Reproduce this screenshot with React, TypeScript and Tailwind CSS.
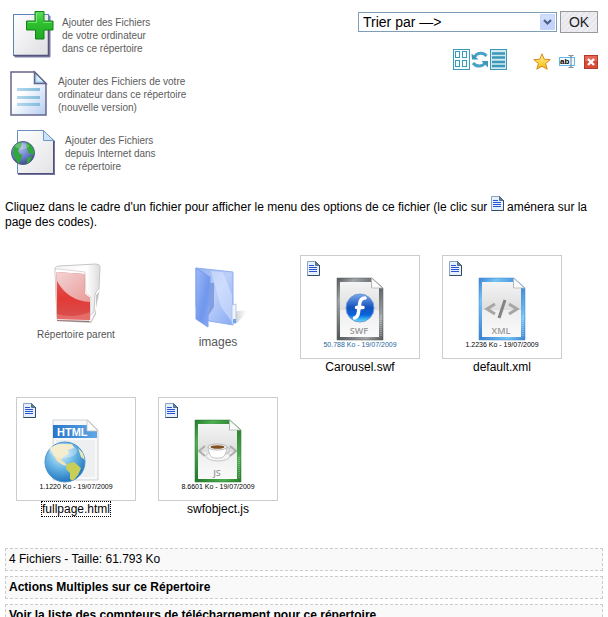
import type { ReactNode } from "react";

function AddFileIcon() {
  return (
    <svg width="44" height="48" viewBox="0 0 44 48" aria-hidden="true" className="shrink-0">
      <defs>
        <linearGradient id="addPaper" x1="0" y1="0" x2="1" y2="1">
          <stop offset="0" stopColor="#fff" />
          <stop offset="1" stopColor="#dedee2" />
        </linearGradient>
        <linearGradient id="addPlus" x1="0" y1="0" x2="0" y2="1">
          <stop offset="0" stopColor="#5ee05e" />
          <stop offset="0.4" stopColor="#2fc02f" />
          <stop offset="1" stopColor="#1eaa22" />
        </linearGradient>
      </defs>
      <rect x="4.500" y="4.500" width="36" height="42" rx="1" fill="#7c7ca6" />
      <rect x="3.500" y="3.500" width="35" height="41" fill="url(#addPaper)" stroke="#5c83b4" />
      <path d="M38.500 12V44.500H4" fill="none" stroke="#54547e" strokeWidth="1.500" />
      <path d="M25 0.500h9V10h9v9h-9v9h-8.500V19H16.500v-9H25z" fill="url(#addPlus)" stroke="#138018" />
      <path d="M26.500 2v9.500H18M33 11.500h8.500" fill="none" stroke="#92ee92" opacity=".7" />
    </svg>
  );
}

function NewFileIcon() {
  return (
    <svg width="40" height="48" viewBox="0 0 40 48" aria-hidden="true" className="shrink-0">
      <defs>
        <linearGradient id="newPaper" x1="0" y1="0" x2="1" y2="1">
          <stop offset="0.4" stopColor="#fff" />
          <stop offset="1" stopColor="#b4cdf0" />
        </linearGradient>
        <linearGradient id="newLine" x1="0" y1="0" x2="1" y2="0">
          <stop offset="0" stopColor="#b4d8ee" />
          <stop offset="1" stopColor="#83bcdc" />
        </linearGradient>
      </defs>
      <path d="M1 2H24.500L36 13.500V45H1z" fill="url(#newPaper)" stroke="#67658a" strokeWidth="1.500" />
      <path d="M24.500 2V13.500H36z" fill="#9fd2ee" stroke="#67658a" strokeWidth="1.500" />
      <path d="M26.500 5v6.500h6.500z" fill="#d6effb" />
      <g fill="url(#newLine)">
        <rect x="7" y="18" width="23" height="3" />
        <rect x="7" y="26" width="23" height="3" />
        <rect x="7" y="33" width="23" height="3" />
      </g>
    </svg>
  );
}

function WebFileIcon() {
  return (
    <svg width="47" height="48" viewBox="0 0 47 48" aria-hidden="true" className="shrink-0">
      <defs>
        <linearGradient id="webPaper" x1="0" y1="0" x2="1" y2="1">
          <stop offset="0" stopColor="#fff" />
          <stop offset="1" stopColor="#e3e3e6" />
        </linearGradient>
        <radialGradient id="webGlobe" cx=".4" cy=".3" r=".75">
          <stop offset="0" stopColor="#aabbe8" />
          <stop offset="0.6" stopColor="#6478c4" />
          <stop offset="1" stopColor="#38427a" />
        </radialGradient>
        <clipPath id="webClip">
          <circle cx="13" cy="24" r="11" />
        </clipPath>
      </defs>
      <path d="M8 2H34L45 12V46H8z" fill="#75759c" />
      <path d="M7.500 1.500H33.500L43.500 11.500V44.500H7.500z" fill="url(#webPaper)" stroke="#6b8dbb" />
      <path d="M43.500 11.500V44.500H8" fill="none" stroke="#50507c" />
      <path d="M33.500 1.500V11.500H43.500z" fill="#cbe2f8" stroke="#6b9ac8" />
      <circle cx="13" cy="24" r="11.500" fill="url(#webGlobe)" stroke="#52608c" />
      <g clipPath="url(#webClip)" fill="#31a83a">
        <path d="M4 15c2-2 5-3 8-2l-1 5-3 3 1 3 3 2-1 4-2 5-3-4-3-6z" />
        <path d="M17 13l5 3 3 7-2 3-4-2-2-4-1-4z" />
        <path d="M17 29l5-2-2 6-3 2z" />
      </g>
      <ellipse cx="12" cy="17" rx="7" ry="3" fill="#fff" opacity=".25" />
    </svg>
  );
}

function NoteIcon({ className = "" }: { className?: string }) {
  return (
    <svg width="13" height="15" viewBox="0 0 13 15" aria-hidden="true" className={className}>
      <path d="M.5.500H8.500L12.500 4.500V14.500H.5z" fill="#e6effb" stroke="#8ba4bd" />
      <path d="M12.500 4V14.500H.5" fill="none" stroke="#2f4d68" />
      <path d="M8.500.500V4.500H12.500z" fill="#5d7f9b" stroke="#34546f" strokeWidth=".7" />
      <path d="M2 4.500H7M2 6.500H10M2 8.500H10M2 10.500H10" stroke="#2554d4" />
    </svg>
  );
}

function GridIcon() {
  return (
    <svg width="17" height="21" viewBox="0 0 17 21" aria-hidden="true">
      <g fill="#f4fbfd" stroke="#3d97b7">
        <rect x=".5" y=".5" width="16" height="20" />
        <rect x="2.500" y="2.500" width="4" height="6" />
        <rect x="9.500" y="2.500" width="4" height="6" />
        <rect x="2.500" y="11.500" width="4" height="6" />
        <rect x="9.500" y="11.500" width="4" height="6" />
      </g>
    </svg>
  );
}

function RefreshIcon() {
  return (
    <svg width="18" height="21" viewBox="0 0 18 21" aria-hidden="true">
      <path d="M3.500 8C6 3.500 12 3 15.500 7" fill="none" stroke="#4aa3c3" strokeWidth="3" />
      <path d="M.5 4.500L1 10.500H7.500z" fill="#3d97b7" />
      <path d="M2 14C5 18 11.500 18 14 14" fill="none" stroke="#4aa3c3" strokeWidth="3" />
      <path d="M10.500 12H17V18.500z" fill="#3d97b7" />
    </svg>
  );
}

function ListIcon() {
  return (
    <svg width="17" height="21" viewBox="0 0 17 21" aria-hidden="true">
      <rect x=".5" y=".5" width="16" height="20" fill="#d0eaf3" stroke="#3d97b7" />
      <path d="M2 4.500H15M2 8.500H15M2 13H15M2 17H15" stroke="#3d97b7" strokeWidth="2.500" />
    </svg>
  );
}

function StarIcon() {
  return (
    <svg width="18" height="17" viewBox="0 0 18 17" aria-hidden="true">
      <defs>
        <linearGradient id="star" x1="0" y1="0" x2="0" y2="1">
          <stop offset="0" stopColor="#fff59a" />
          <stop offset="1" stopColor="#f7b90c" />
        </linearGradient>
      </defs>
      <path
        d="M9 .8l2.200 5.400 6 .5-4.600 3.800 1.600 5.700L9 13.200l-5.200 3 1.600-5.700L.8 6.700l6-.5z"
        fill="url(#star)"
        stroke="#d98a1c"
        strokeLinejoin="round"
      />
    </svg>
  );
}

function RenameIcon() {
  return (
    <svg width="17" height="15" viewBox="0 0 17 15" aria-hidden="true">
      <rect x=".5" y="3.500" width="15" height="8" fill="#f2fafe" stroke="#5fbae8" />
      <text x="1" y="10" fontSize="8" fontWeight="bold" fontFamily="Liberation Sans, sans-serif">
        ab
      </text>
      <path d="M9.500 1.500H11.500L12 2.500 12.500 1.500H14.500M12 2V13M9.500 13.500H11.500L12 12.500 12.500 13.500H14.500" fill="none" stroke="#6f7f8e" />
    </svg>
  );
}

function DeleteIcon() {
  return (
    <svg width="14" height="14" viewBox="0 0 14 14" aria-hidden="true">
      <rect x=".5" y=".5" width="13" height="13" fill="#d94a37" stroke="#b5382b" />
      <path d="M1 1H13V6H1z" fill="#ea7c6a" opacity=".6" />
      <path d="M4 4l6 6M10 4l-6 6" stroke="#fff" strokeWidth="2.400" />
    </svg>
  );
}

function RedFolder() {
  return (
    <svg width="50" height="60" viewBox="0 0 50 60" aria-hidden="true">
      <defs>
        <linearGradient id="redFront" x1="0" y1="0" x2="0" y2="1">
          <stop offset="0" stopColor="#df6464" />
          <stop offset=".55" stopColor="#e23a35" />
          <stop offset="1" stopColor="#d65353" />
        </linearGradient>
        <linearGradient id="redGloss" x1="0" y1="0" x2="1" y2="1">
          <stop offset="0" stopColor="#f3d4d4" />
          <stop offset="1" stopColor="#e99a98" />
        </linearGradient>
        <linearGradient id="redBack" x1="0" y1="0" x2="1" y2="0">
          <stop offset="0" stopColor="#f4f4f4" />
          <stop offset=".7" stopColor="#fff" />
          <stop offset="1" stopColor="#dcdcdc" />
        </linearGradient>
      </defs>
      <path d="M2 58L38 60 43 51 43 32 47 28V26L42 50 38 58z" fill="#8a8a8a" opacity=".5" />
      <path d="M2 5Q3 3 6 3L43 1Q47 1 47 4L46 26Q42 29 42 32L41 49 36 53 4 54z" fill="url(#redBack)" stroke="#c6c6c6" />
      <path d="M2 8Q2 5 5 6L32 9 33 30 38 34 37 57Q36 58 34 58L4 57z" fill="#fff" stroke="#cbbcbc" strokeWidth=".6" />
      <path d="M3.500 9L31.500 11 32 31 37 35V57L4 56z" fill="url(#redFront)" />
      <path d="M3.500 9L31.500 11 32 31 37 35V39Q15 38 4 18z" fill="url(#redGloss)" />
      <path d="M4 51Q20 56 37 49V57L4 56z" fill="#f07f79" opacity=".6" />
      <path d="M4 57.500L36 58.500" stroke="#7c4444" opacity=".7" />
    </svg>
  );
}

function BlueFolder() {
  return (
    <svg width="54" height="62" viewBox="0 0 54 62" aria-hidden="true">
      <defs>
        <linearGradient id="blueBack" x1="0" y1="0" x2="1" y2="1">
          <stop offset="0" stopColor="#93aff4" />
          <stop offset=".5" stopColor="#bccffa" />
          <stop offset="1" stopColor="#88aaf3" />
        </linearGradient>
        <linearGradient id="blueFront" x1="0" y1="0" x2="1" y2="1">
          <stop offset="0" stopColor="#9fb9f8" />
          <stop offset=".6" stopColor="#6f97ed" />
          <stop offset="1" stopColor="#8eaef5" />
        </linearGradient>
        <linearGradient id="blueShade" x1="0" y1="0" x2="1" y2="0">
          <stop offset="0" stopColor="#999" stopOpacity=".6" />
          <stop offset="1" stopColor="#ccc" stopOpacity="0" />
        </linearGradient>
      </defs>
      <path d="M38 56L42 44 53 43Q48 50 42 56z" fill="url(#blueShade)" />
      <path d="M1 1L38 5V58L14 54 1 40z" fill="url(#blueBack)" stroke="#92aff0" />
      <path d="M16 4L28 5 37 28V55L26 40z" fill="#e0e9ff" opacity=".5" />
      <path d="M15 16H19V40L13 49z" fill="#557bc9" opacity=".55" />
      <path d="M1 1L15 10V36L13 40V60L1 52z" fill="url(#blueFront)" stroke="#7c9eea" />
      <path d="M37 38L41 37V56L37 57z" fill="#f1f5fb" stroke="#a6bfe8" strokeWidth=".8" />
      <path d="M38 52H41V56H38z" fill="#6fa6e8" />
    </svg>
  );
}

type PageFrameProps = { id: string; edge: string; light: string; label: string; children: ReactNode };

function PageFrame({ id, edge, light, label, children }: PageFrameProps) {
  return (
    <svg width="48" height="64" viewBox="0 0 48 64" aria-hidden="true">
      <defs>
        <linearGradient id={`${id}Edge`} x1="0" y1="0" x2="1" y2="1">
          <stop offset="0" stopColor={edge} />
          <stop offset=".2" stopColor={light} />
          <stop offset=".5" stopColor={edge} />
          <stop offset=".8" stopColor={light} />
          <stop offset="1" stopColor={edge} />
        </linearGradient>
        <linearGradient id={`${id}Paper`} x1="0" y1="0" x2="0" y2="1">
          <stop offset="0" stopColor="#f4f4f4" />
          <stop offset=".5" stopColor="#dedede" />
          <stop offset=".51" stopColor="#eee" />
          <stop offset="1" stopColor="#fafafa" />
        </linearGradient>
      </defs>
      <path d="M1 1H36L47 11V63H1z" fill={`url(#${id}Edge)`} stroke={edge} strokeOpacity=".5" />
      <path d="M4 5H35V11H43V60H4z" fill={`url(#${id}Paper)`} />
      <path d="M35.500 1V11H46.500z" fill="#fafafa" stroke="#b5b5b5" strokeWidth=".8" />
      <path d="M45 38V59" stroke="#fff" strokeDasharray="1 1" opacity=".5" />
      {children}
      <text x="23" y="57" textAnchor="middle" fontSize="9" fill="#999" fontFamily="Open Sans, Noto Sans, sans-serif" fontWeight="600">
        {label}
      </text>
    </svg>
  );
}

function SwfIcon() {
  return (
    <PageFrame id="swf" edge="#55585a" light="#a2a6a8" label="SWF">
      <defs>
        <linearGradient id="flashBall" x1="0" y1="0" x2="0" y2="1">
          <stop offset="0" stopColor="#7ca8ea" />
          <stop offset=".48" stopColor="#1452bc" />
          <stop offset=".75" stopColor="#0a65dd" />
          <stop offset="1" stopColor="#5be5ff" />
        </linearGradient>
      </defs>
      <circle cx="24" cy="31" r="14" fill="url(#flashBall)" stroke="#6f96d6" />
      <path d="M29 21Q24 21 23.500 28L22.500 35Q22 40 18.500 41M20.500 30.500H27" fill="none" stroke="#fff" strokeWidth="3.500" strokeLinecap="round" />
    </PageFrame>
  );
}

function XmlIcon() {
  return (
    <PageFrame id="xml" edge="#3c83d2" light="#76c4f5" label="XML">
      <path d="M17 27L9 32 17 37M31 27L39 32 31 37" fill="none" stroke="#a6a6a6" strokeWidth="3" />
      <path d="M27 23L21 41" stroke="#838383" strokeWidth="3" />
    </PageFrame>
  );
}

function JsIcon() {
  return (
    <PageFrame id="js" edge="#267a2c" light="#4fae51" label="JS">
      <path d="M11 27L5 32 11 37M36 27L42 32 36 37" fill="none" stroke="#adadad" strokeWidth="2" />
      <ellipse cx="24" cy="37" rx="12" ry="5" fill="#f4f4f4" stroke="#bbb" strokeWidth=".8" />
      <path d="M32 29Q38 28 35 33 34 35 30 35" fill="none" stroke="#ccc" strokeWidth="1.500" />
      <path d="M14 28Q15 39 21 39H26Q32 39 33 28z" fill="#fff" stroke="#bbb" strokeWidth=".8" />
      <ellipse cx="23.500" cy="28" rx="9.500" ry="3" fill="#f6f6f6" stroke="#aaa" strokeWidth=".8" />
      <ellipse cx="23.500" cy="28" rx="7" ry="1.800" fill="#815021" />
    </PageFrame>
  );
}

function HtmlIcon() {
  return (
    <svg width="64" height="64" viewBox="8 0 64 64" aria-hidden="true">
      <defs>
        <radialGradient id="earth" cx=".4" cy=".3" r=".75">
          <stop offset="0" stopColor="#d8f1fb" />
          <stop offset=".5" stopColor="#64b3e4" />
          <stop offset="1" stopColor="#1b6cb8" />
        </radialGradient>
        <linearGradient id="htmlBand" x1="0" y1="0" x2="1" y2="0">
          <stop offset="0" stopColor="#2a76c9" />
          <stop offset="1" stopColor="#61a7e6" />
        </linearGradient>
        <clipPath id="earthClip">
          <circle cx="29" cy="43" r="20" />
        </clipPath>
      </defs>
      <path d="M17 1H52L62 11V61H17z" fill="#f7f8f9" stroke="#cfd1d4" />
      <path d="M20 21H59V58H20z" fill="#edeff1" />
      <path d="M17 6H55L61 12V19H17z" fill="url(#htmlBand)" />
      <text x="21" y="17" fontSize="11" fontWeight="bold" fill="#fff" fontFamily="Liberation Sans, sans-serif">
        HTML
      </text>
      <path d="M51 1V12H62z" fill="#fbfbfb" stroke="#bfc1c4" strokeWidth=".8" />
      <circle cx="29" cy="43" r="20" fill="url(#earth)" stroke="#4b94cc" />
      <g clipPath="url(#earthClip)">
        <path d="M13 29L22 25 36 25 38 29 32 31 33 35 28 37 25 41 29 44 31 47 27 46 21 42 17 35z" fill="#f1e5ba" />
        <path d="M31 45L38 43 45 49 42 56 37 62 34 60 34 54 30 50z" fill="#c8cf58" />
        <path d="M42 29L47 34 49 41 45 38z" fill="#e5e9ba" />
      </g>
      <ellipse cx="27" cy="32" rx="14" ry="7" fill="#fff" opacity=".3" />
    </svg>
  );
}

const uploads = [
  { icon: <AddFileIcon />, lines: ["Ajouter des Fichiers", "de votre ordinateur", "dans ce répertoire"] },
  { icon: <NewFileIcon />, lines: ["Ajouter des Fichiers de votre", "ordinateur dans ce répertoire", "(nouvelle version)"] },
  { icon: <WebFileIcon />, lines: ["Ajouter des Fichiers", "depuis Internet dans", "ce répertoire"] },
];

const files = [
  { name: "Carousel.swf", info: "50.788 Ko - 19/07/2009", icon: <SwfIcon />, infoColor: "text-[#1c66a0]", frame: "border-transparent" },
  { name: "default.xml", info: "1.2236 Ko - 19/07/2009", icon: <XmlIcon />, infoColor: "text-black", frame: "border-transparent" },
  { name: "fullpage.html", info: "1.1220 Ko - 19/07/2009", icon: <HtmlIcon />, infoColor: "text-black", frame: "border-black" },
  { name: "swfobject.js", info: "8.6601 Ko - 19/07/2009", icon: <JsIcon />, infoColor: "text-black", frame: "border-transparent" },
];

export default function App() {
  return (
    <main className="h-screen overflow-hidden bg-white px-[5px] font-['Liberation_Sans',Arial,sans-serif] text-xs leading-[15px] text-black">
      <header className="flex items-start justify-between px-[5px] pt-[11px]">
        <nav className="flex flex-col gap-[11px]">
          {uploads.map((u) => (
            <a key={u.lines.join()} href="#" className="flex h-12 items-center gap-2 text-[10px] leading-[13px] text-[#5c5c5c]">
              {u.icon}
              <span>
                {u.lines.map((l) => (
                  <span key={l} className="block">{l}</span>
                ))}
              </span>
            </a>
          ))}
        </nav>
        <div className="flex flex-col items-end gap-[15px]">
          <form className="flex items-center gap-[3px] text-sm" onSubmit={(e) => e.preventDefault()}>
            <div className="relative">
              <select aria-label="Trier par" className="block h-5 w-[199px] appearance-none border border-[#7f9db9] bg-white pl-1 leading-[18px] outline-none">
                <option>Trier par —&gt;</option>
              </select>
              <svg width="15" height="16" viewBox="0 0 15 16" aria-hidden="true" className="pointer-events-none absolute top-[2px] right-[2px]">
                <rect width="15" height="16" rx="1" fill="#c3d3fb" />
                <path d="M1 1H14V7H1z" fill="#d6e2fd" opacity=".7" />
                <path d="M4 6L7.500 9.500 11 6" fill="none" stroke="#4d6185" strokeWidth="2.200" />
              </svg>
            </div>
            <button className="h-[22px] w-[38px] border border-[#999] bg-[#e9e9ef] bg-[repeating-linear-gradient(135deg,#e6e6ec_0_2px,#eeeef3_2px_4px)] text-[#222]">OK</button>
          </form>
          <div className="flex items-center">
            <button aria-label="Vignettes"><GridIcon /></button>
            <button aria-label="Actualiser" className="mx-px"><RefreshIcon /></button>
            <button aria-label="Liste"><ListIcon /></button>
            <div className="ml-[26px] flex items-center gap-2 pt-[5px]">
              <button aria-label="Favori"><StarIcon /></button>
              <button aria-label="Renommer"><RenameIcon /></button>
              <button aria-label="Supprimer"><DeleteIcon /></button>
            </div>
          </div>
        </div>
      </header>

      <p className="mt-[19px] overflow-hidden whitespace-nowrap">
        Cliquez dans le cadre d'un fichier pour afficher le menu des options de ce fichier (le clic sur{" "}
        <NoteIcon className="inline-block align-baseline" /> aménera sur la
        <br />
        page des codes).
      </p>

      <section aria-label="Fichiers" className="mt-[25px] grid auto-rows-[142px] grid-cols-[repeat(auto-fill,120px)] gap-x-[22px] pl-[11px]">
        <a href="#" className="flex flex-col items-center pt-2 text-[10px] text-[#555]">
          <span className="pl-1"><RedFolder /></span>
          <span className="mt-1">Répertoire parent</span>
        </a>
        <a href="#" className="flex flex-col items-center pt-3 text-[#555]">
          <span className="pl-2"><BlueFolder /></span>
          <span className="mt-[6px]">images</span>
        </a>
        {files.map((f) => (
          <article key={f.name} className="flex flex-col items-center">
            <div className="relative flex h-[104px] w-full flex-col items-center justify-end border border-[#ccc] pb-2">
              <NoteIcon className="absolute top-[5px] left-[6px]" />
              {f.icon}
              <span className={`-mt-px text-[7px] leading-[10px] ${f.infoColor}`}>{f.info}</span>
            </div>
            <a href="#" className={`border border-dotted leading-[14px] ${f.frame}`}>{f.name}</a>
          </article>
        ))}
      </section>

      <footer className="mt-[9px] flex flex-col gap-[5px]">
        <p className="border border-dashed border-[#ccc] bg-[#f9f9f9] p-[3px]">4 Fichiers - Taille: 61.793 Ko</p>
        <button className="border border-dashed border-[#ccc] bg-[#f9f9f9] p-[3px] text-left font-bold">Actions Multiples sur ce Répertoire</button>
        <button className="border border-dashed border-[#ccc] bg-[#f9f9f9] p-[3px] text-left font-bold">
          Voir la liste des compteurs de téléchargement pour ce répertoire
        </button>
      </footer>
    </main>
  );
}
